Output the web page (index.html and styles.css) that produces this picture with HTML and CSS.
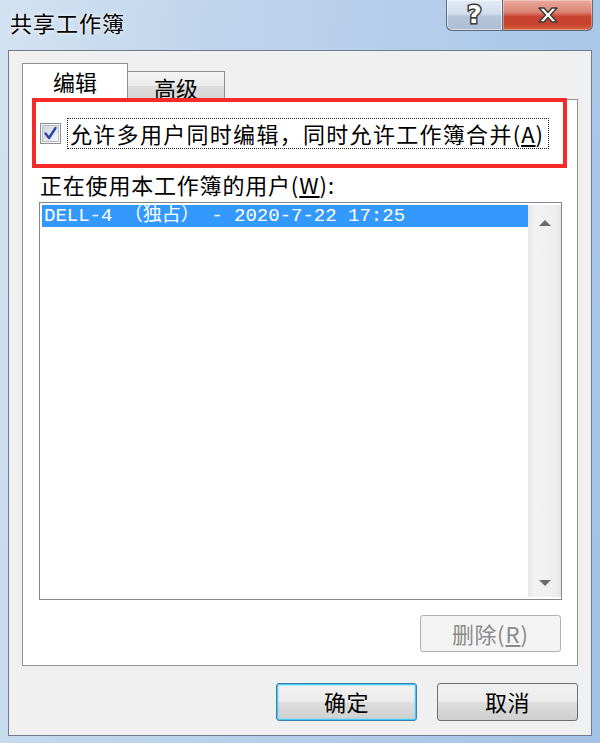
FILE: index.html
```html
<!DOCTYPE html>
<html lang="zh-CN">
<head>
  <meta charset="UTF-8">
  <title>共享工作簿</title>
  <link rel="stylesheet" href="styles.css">
</head>
<body>
  <div class="window">
    <div class="titlebar">
      <div class="title">共享工作簿</div>
      <div class="caption-buttons">
        <div class="cap-btn cap-help"><span>?</span></div>
        <div class="cap-btn cap-close">
          <svg width="26" height="20" viewBox="0 0 26 20">
            <path d="M4 3 L9 3 L13 7.5 L17 3 L22 3 L15.5 10 L22 17 L17 17 L13 12.5 L9 17 L4 17 L10.5 10 Z" fill="#fff" stroke="#3a3a3a" stroke-width="1.4" stroke-linejoin="round"/>
          </svg>
        </div>
      </div>
    </div>

    <div class="client">
      <div class="tabs">
        <div class="tab active">编辑</div>
        <div class="tab">高级</div>
      </div>

      <div class="panel">
        <div class="highlight">
          <div class="check-row">
            <svg class="checkbox" width="21" height="21" viewBox="0 0 21 21">
              <defs>
                <linearGradient id="cb" x1="0" y1="0" x2="1" y2="1">
                  <stop offset="0" stop-color="#cfd4da"/>
                  <stop offset="1" stop-color="#f6f7f8"/>
                </linearGradient>
              </defs>
              <rect x="0.5" y="0.5" width="20" height="20" fill="#fff" stroke="#8e8f8f"/>
              <rect x="2.5" y="2.5" width="16" height="16" fill="url(#cb)" stroke="#b8bcc2"/>
              <path d="M5.5 10.5 L9 15 L15.5 5" fill="none" stroke="#2b44a8" stroke-width="2.4" stroke-linecap="round" stroke-linejoin="round"/>
            </svg>
            <span class="check-label">允许多用户同时编辑，同时允许工作簿合并<span class="key">(<u>A</u>)</span></span>
          </div>
        </div>

        <div class="users-label">正在使用本工作簿的用户<span class="key">(<u>W</u>)</span>:</div>

        <div class="listbox">
          <div class="list-items">
            <div class="list-item selected">DELL-4 （独占） - 2020-7-22 17:25</div>
          </div>
          <div class="scrollbar">
            <svg width="14" height="8" viewBox="0 0 14 8"><path d="M1 7 L7 1 L13 7 Z" fill="#6b6b6b"/></svg>
            <svg width="14" height="8" viewBox="0 0 14 8"><path d="M1 1 L7 7 L13 1 Z" fill="#6b6b6b"/></svg>
          </div>
        </div>

        <div class="panel-actions">
          <div class="btn disabled">删除<span class="key">(<u>R</u>)</span></div>
        </div>
      </div>

      <div class="dialog-actions">
        <div class="btn default">确定</div>
        <div class="btn">取消</div>
      </div>
    </div>
  </div>
</body>
</html>
```

FILE: styles.css
```css
html, body {
  margin: 0;
  padding: 0;
}

body {
  width: 600px;
  height: 743px;
  overflow: hidden;
  font-family: "Noto Sans CJK SC", "Liberation Sans", sans-serif;
  color: #000;
}

.window {
  width: 600px;
  height: 743px;
  box-sizing: border-box;
  padding: 0 8px 7px 8px;
  background: linear-gradient(100deg, #d3e2f2 0%, #bfd5ec 30%, #b3cdea 60%, #a3c2e6 100%);
  display: flex;
  flex-direction: column;
}

/* barre de titre */
.titlebar {
  height: 50px;
  display: flex;
  justify-content: space-between;
  align-items: flex-start;
}

.title {
  margin: 6px 0 0 2px;
  font-size: 22px;
  line-height: 32px;
  letter-spacing: 1px;
  text-shadow: 0 0 6px rgba(255,255,255,0.9), 0 0 2px rgba(255,255,255,0.9);
}

.caption-buttons {
  display: flex;
  margin-right: -1px;
}

.cap-btn {
  height: 31px;
  display: flex;
  align-items: center;
  justify-content: center;
  border: 1px solid #5d6b7e;
  border-top: none;
  box-sizing: border-box;
}

.cap-help {
  width: 56px;
  border-right: none;
  border-bottom-left-radius: 6px;
  background: linear-gradient(#e3ebf4 0%, #d2deec 45%, #b5c6da 55%, #aebfd5 100%);
  box-shadow: inset 0 0 0 1px rgba(255,255,255,0.5);
}

.cap-help span {
  font-family: "DejaVu Sans", sans-serif;
  font-weight: bold;
  font-size: 25px;
  line-height: 1;
  margin-top: -2px;
  color: #fff;
  -webkit-text-stroke: 3px #3a3a3a;
  paint-order: stroke fill;
}

.cap-close {
  width: 91px;
  border-bottom-right-radius: 6px;
  background: linear-gradient(#e9a99d 0%, #dc8574 40%, #c84532 55%, #c7412d 80%, #d5613e 100%);
  box-shadow: inset 0 0 0 1px rgba(255,255,255,0.35);
}

/* zone client */
.client {
  flex: 1;
  border: 1px solid #6f7c8c;
  background: #f0f0f0;
  padding: 12px 13px 0 13px;
  display: flex;
  flex-direction: column;
}

.tabs {
  display: flex;
  align-items: flex-end;
  height: 36px;
  position: relative;
  z-index: 1;
}

.tab {
  box-sizing: border-box;
  border: 1px solid #8d9095;
  border-bottom: none;
  font-size: 22px;
  text-align: center;
}

.tab.active {
  width: 106px;
  height: 37px;
  margin-bottom: -1px;
  background: #fff;
  line-height: 34px;
}

.tab:not(.active) {
  width: 97px;
  height: 28px;
  border-left: none;
  line-height: 30px;
  background: linear-gradient(#f4f4f4 0%, #ebebeb 50%, #dcdcdc 51%, #d6d6d6 100%);
}

.panel {
  height: 567px;
  box-sizing: border-box;
  border: 1px solid #8d9095;
  background: #fff;
  display: flex;
  flex-direction: column;
}

/* cadre rouge */
.highlight {
  position: relative;
  z-index: 2;
  margin: -2px 10px 0 9px;
  height: 70px;
  box-sizing: border-box;
  border: 4px solid #f72a2a;
  display: flex;
  align-items: center;
}

.check-row {
  display: flex;
  align-items: center;
  margin-left: 4px;
}

.checkbox {
  margin-right: 6px;
}

.check-label {
  border: 1px dotted #222;
  padding: 0 4px 0 2px;
  font-size: 22px;
  line-height: 29px;
  letter-spacing: 1.3px;
  white-space: nowrap;
}

.key {
  letter-spacing: 1px;
}

.users-label {
  margin: 1px 0 0 17px;
  font-size: 22px;
  line-height: 30px;
  letter-spacing: 0.8px;
}

.listbox {
  margin: 3px 15px 0 16px;
  height: 398px;
  box-sizing: border-box;
  border: 1px solid #82878f;
  background: #fff;
  display: flex;
  padding: 2px 0 2px 2px;
}

.list-items {
  flex: 1;
}

.list-item {
  font-family: "Liberation Mono", "Noto Sans CJK SC", monospace;
  font-size: 19px;
  line-height: 22px;
  padding-left: 2px;
  white-space: nowrap;
}

.list-item.selected {
  background: #3399ff;
  color: #fff;
}

.scrollbar {
  width: 33px;
  background: linear-gradient(90deg, #e6e6e6, #f2f2f2 20%, #efefef 80%, #e4e4e4);
  display: flex;
  flex-direction: column;
  justify-content: space-between;
  align-items: center;
  padding: 14px 0 10px;
}

.panel-actions {
  display: flex;
  justify-content: flex-end;
  margin: 15px 16px 0 0;
}

/* boutons */
.btn {
  width: 141px;
  height: 37px;
  box-sizing: border-box;
  border: 1px solid #707070;
  border-radius: 3px;
  background: linear-gradient(#f2f2f2 0%, #ebebeb 48%, #dddddd 52%, #cfcfcf 100%);
  font-size: 22px;
  line-height: 34px;
  text-align: center;
  letter-spacing: 0.5px;
}

.btn.disabled {
  border-color: #adb2b5;
  background: #f4f4f4;
  color: #8a8a8a;
}

.btn.default {
  border-color: #3c7fb1;
  box-shadow: inset 0 0 0 1px #48c8f5, inset 0 0 0 2px rgba(110,220,250,0.4);
}

.dialog-actions {
  display: flex;
  justify-content: flex-end;
  gap: 20px;
  margin-top: 17px;
}

.dialog-actions .btn {
  height: 38px;
}
```
